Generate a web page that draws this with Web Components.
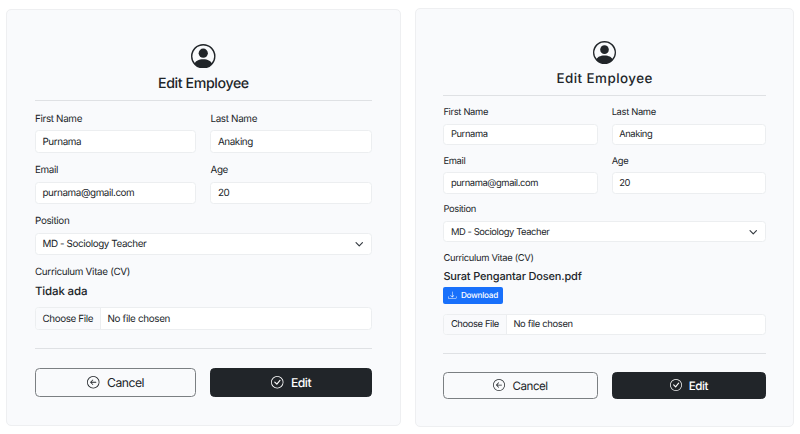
<!DOCTYPE html>
<html lang="en">
<head>
<meta charset="utf-8">
<title>Edit Employee</title>
<style>
html,body{margin:0;background:#fff}
body{width:800px;height:434px;overflow:hidden;color:#212529;font-family:Inter,"Liberation Sans",sans-serif;text-rendering:geometricPrecision}
main{display:flex;align-items:flex-start;gap:14.2px;padding:8px 0 0 5.7px}
#plain{margin-top:1px;width:395.5px;height:417px;--pt:33.5px;--px:28.3px;--icon:24.5px;--tg:5.6px;--title:14.2px;--tls:-.4px;--hg:6.4px;--hr:1.5px;--bg:9.5px;--fs:9.85px;--lh:15px;--ih:22.5px;--fg:9.2px;--ng:3.5px;--name:11.5px;--nls:-.15px;--fileg:8.2px;--pick:65px;--end:18.7px;--act:18.8px;--bh:28.5px;--bfs:12.2px;--bi:12.5px;--bgap:7.2px}
#attached{width:378.5px;height:419px;--pt:32px;--px:27px;--icon:23px;--tg:4.8px;--title:13.4px;--tls:.45px;--hg:6.2px;--hr:1px;--bg:9.2px;--fs:9.4px;--lh:14px;--ih:21.3px;--fg:8.95px;--ng:2.8px;--name:11px;--nls:-.17px;--fileg:9.7px;--pick:62.5px;--end:17.5px;--act:18.2px;--bh:27.3px;--bfs:11.6px;--bi:12px;--bgap:7.2px}
</style>
</head>
<body>
<main>
  <employee-card id="plain" heading="Edit Employee">
    <text-field label="First Name" value="Purnama"></text-field>
    <text-field label="Last Name" value="Anaking"></text-field>
    <text-field label="Email" value="purnama@gmail.com"></text-field>
    <text-field label="Age" value="20"></text-field>
    <text-field wide select label="Position" value="MD - Sociology Teacher"></text-field>
    <cv-field name="Tidak ada"></cv-field>
    <action-button slot="actions" kind="cancel">Cancel</action-button>
    <action-button slot="actions" kind="edit">Edit</action-button>
  </employee-card>
  <employee-card id="attached" heading="Edit Employee">
    <text-field label="First Name" value="Purnama"></text-field>
    <text-field label="Last Name" value="Anaking"></text-field>
    <text-field label="Email" value="purnama@gmail.com"></text-field>
    <text-field label="Age" value="20"></text-field>
    <text-field wide select label="Position" value="MD - Sociology Teacher"></text-field>
    <cv-field name="Surat Pengantar Dosen.pdf"><download-button>Download</download-button></cv-field>
    <action-button slot="actions" kind="cancel">Cancel</action-button>
    <action-button slot="actions" kind="edit">Edit</action-button>
  </employee-card>
</main>
<script>
const base = '<style>*{box-sizing:border-box}:host{box-sizing:border-box;white-space:nowrap}svg{display:block;flex:none}</style>';
const define = (name, render) => customElements.define(name, class extends HTMLElement {
  constructor(){ super(); this.attachShadow({mode:'open'}); }
  connectedCallback(){ this.shadowRoot.innerHTML = base + render(this); }
});
define('employee-card', el => `
<style>
:host{display:flex;flex-direction:column;border:1px solid #eeeff1;border-radius:5px;background:#f9fafc;padding:var(--pt) var(--px) 0}
.head svg{width:var(--icon);height:var(--icon);margin:0 auto}
h1{margin:var(--tg) 0 0;font-size:var(--title);line-height:20px;height:20px;font-weight:550;text-align:center;letter-spacing:var(--tls)}
.rule{height:var(--hr);background:#dfe1e4;flex:none}
.top{margin-top:var(--hg)}
.fields{display:grid;grid-template-columns:1fr 1fr;column-gap:14px;row-gap:var(--fg);margin-top:var(--bg)}
.bottom{margin-top:var(--end);height:1px}
.actions{display:grid;grid-template-columns:1fr 1fr;column-gap:14px;margin-top:var(--act)}
</style>
<div class="head"><svg viewBox="0 0 16 16" fill="currentColor"><path d="M11 6a3 3 0 1 1-6 0 3 3 0 0 1 6 0"/><path fill-rule="evenodd" d="M0 8a8 8 0 1 1 16 0A8 8 0 0 1 0 8m8-7a7 7 0 0 0-5.468 11.37C3.242 11.226 4.805 10 8 10s4.757 1.225 5.468 2.37A7 7 0 0 0 8 1"/></svg>
<h1>${el.getAttribute('heading')}</h1></div>
<div class="rule top"></div>
<div class="fields"><slot></slot></div>
<div class="rule bottom"></div>
<div class="actions"><slot name="actions"></slot></div>`);

define('text-field', el => `
<style>
:host{display:block;min-width:0;font-size:var(--fs);letter-spacing:-.33px}
:host([wide]){grid-column:1/-1}
label{display:block;height:var(--lh);line-height:var(--lh);padding-top:.7px}
.box{display:flex;align-items:center;justify-content:space-between;margin-top:4.5px;height:var(--ih);padding:.6px 7.5px 0 6.5px;border:1px solid #eceef0;border-radius:3.5px;background:#fff;letter-spacing:-.4px}
svg{width:8.5px;height:8.5px}
</style>
<label>${el.getAttribute('label')}</label>
<div class="box"><span>${el.getAttribute('value')}</span>${el.hasAttribute('select') ? '<svg viewBox="0 0 16 16" fill="none" stroke="#343a40" stroke-width="2.2" stroke-linecap="round" stroke-linejoin="round"><path d="m2 5 6 6 6-6"/></svg>' : ''}</div>`);

define('cv-field', el => `
<style>
:host{display:block;grid-column:1/-1;font-size:var(--fs);letter-spacing:-.32px}
label{display:block;height:var(--lh);line-height:var(--lh);padding-top:.4px}
.name{margin-top:var(--ng);height:16px;line-height:16px;font-size:var(--name);font-weight:550;letter-spacing:var(--nls)}
.file{display:flex;margin-top:var(--fileg);height:var(--ih);border:1px solid #eceef0;border-radius:3.5px;background:#fff;overflow:hidden}
.pick,.none{display:flex;align-items:center;padding:.7px 0 0 6.5px}
.pick{width:var(--pick);background:#f9fafc;border-right:1px solid #eceef0;letter-spacing:-.38px}
</style>
<label>Curriculum Vitae (CV)</label>
<div class="name">${el.getAttribute('name')}</div>
<slot></slot>
<div class="file"><span class="pick">Choose File</span><span class="none">No file chosen</span></div>`);

define('download-button', () => `
<style>
:host{display:flex;align-items:center;gap:4px;width:59.3px;height:17.5px;margin-top:2.5px;padding-left:5px;border-radius:2px;background:#1870fb;color:#fff;font-size:8.2px;font-weight:500;letter-spacing:-.27px}
svg{width:8.5px;height:8.5px}
</style>
<svg viewBox="0 0 16 16" fill="currentColor"><path d="M.5 9.9a.5.5 0 0 1 .5.5v2.5a1 1 0 0 0 1 1h12a1 1 0 0 0 1-1v-2.5a.5.5 0 0 1 1 0v2.5a2 2 0 0 1-2 2H2a2 2 0 0 1-2-2v-2.5a.5.5 0 0 1 .5-.5"/><path d="M7.646 11.854a.5.5 0 0 0 .708 0l3-3a.5.5 0 0 0-.708-.708L8.5 10.293V1.5a.5.5 0 0 0-1 0v8.793L5.354 8.146a.5.5 0 1 0-.708.708z"/></svg><span><slot></slot></span>`);

const glyphs = {
  cancel: 'M1 8a7 7 0 1 0 14 0A7 7 0 0 0 1 8m15 0A8 8 0 1 1 0 8a8 8 0 0 1 16 0m-4.500-.5a.5.5 0 0 1 0 1H5.707l2.147 2.146a.5.5 0 0 1-.708.708l-3-3a.5.5 0 0 1 0-.708l3-3a.5.5 0 1 1 .708.708L5.707 7.500z',
  edit: 'M8 15A7 7 0 1 1 8 1a7 7 0 0 1 0 14m0 1A8 8 0 1 0 8 0a8 8 0 0 0 0 16M10.970 4.970a.235.235 0 0 0-.02.022L7.477 9.417 5.384 7.323a.75.75 0 0 0-1.060 1.060L6.970 11.030a.75.75 0 0 0 1.079-.020l3.992-4.990a.75.75 0 0 0-1.071-1.050'
};
define('action-button', el => `
<style>
:host{display:flex;align-items:center;justify-content:center;gap:var(--bgap);height:var(--bh);border:1px solid #7b7f82;border-radius:4.5px;font-size:var(--bfs);letter-spacing:-.5px}
:host([kind=edit]){background:#212529;border-color:#212529;color:#fff;font-weight:500}
svg{width:var(--bi);height:var(--bi)}
span{padding-top:.6px}
</style>
<svg viewBox="0 0 16 16" fill="currentColor"><path fill-rule="evenodd" d="${glyphs[el.getAttribute('kind')]}"/></svg><span><slot></slot></span>`);
</script>
</body>
</html>
